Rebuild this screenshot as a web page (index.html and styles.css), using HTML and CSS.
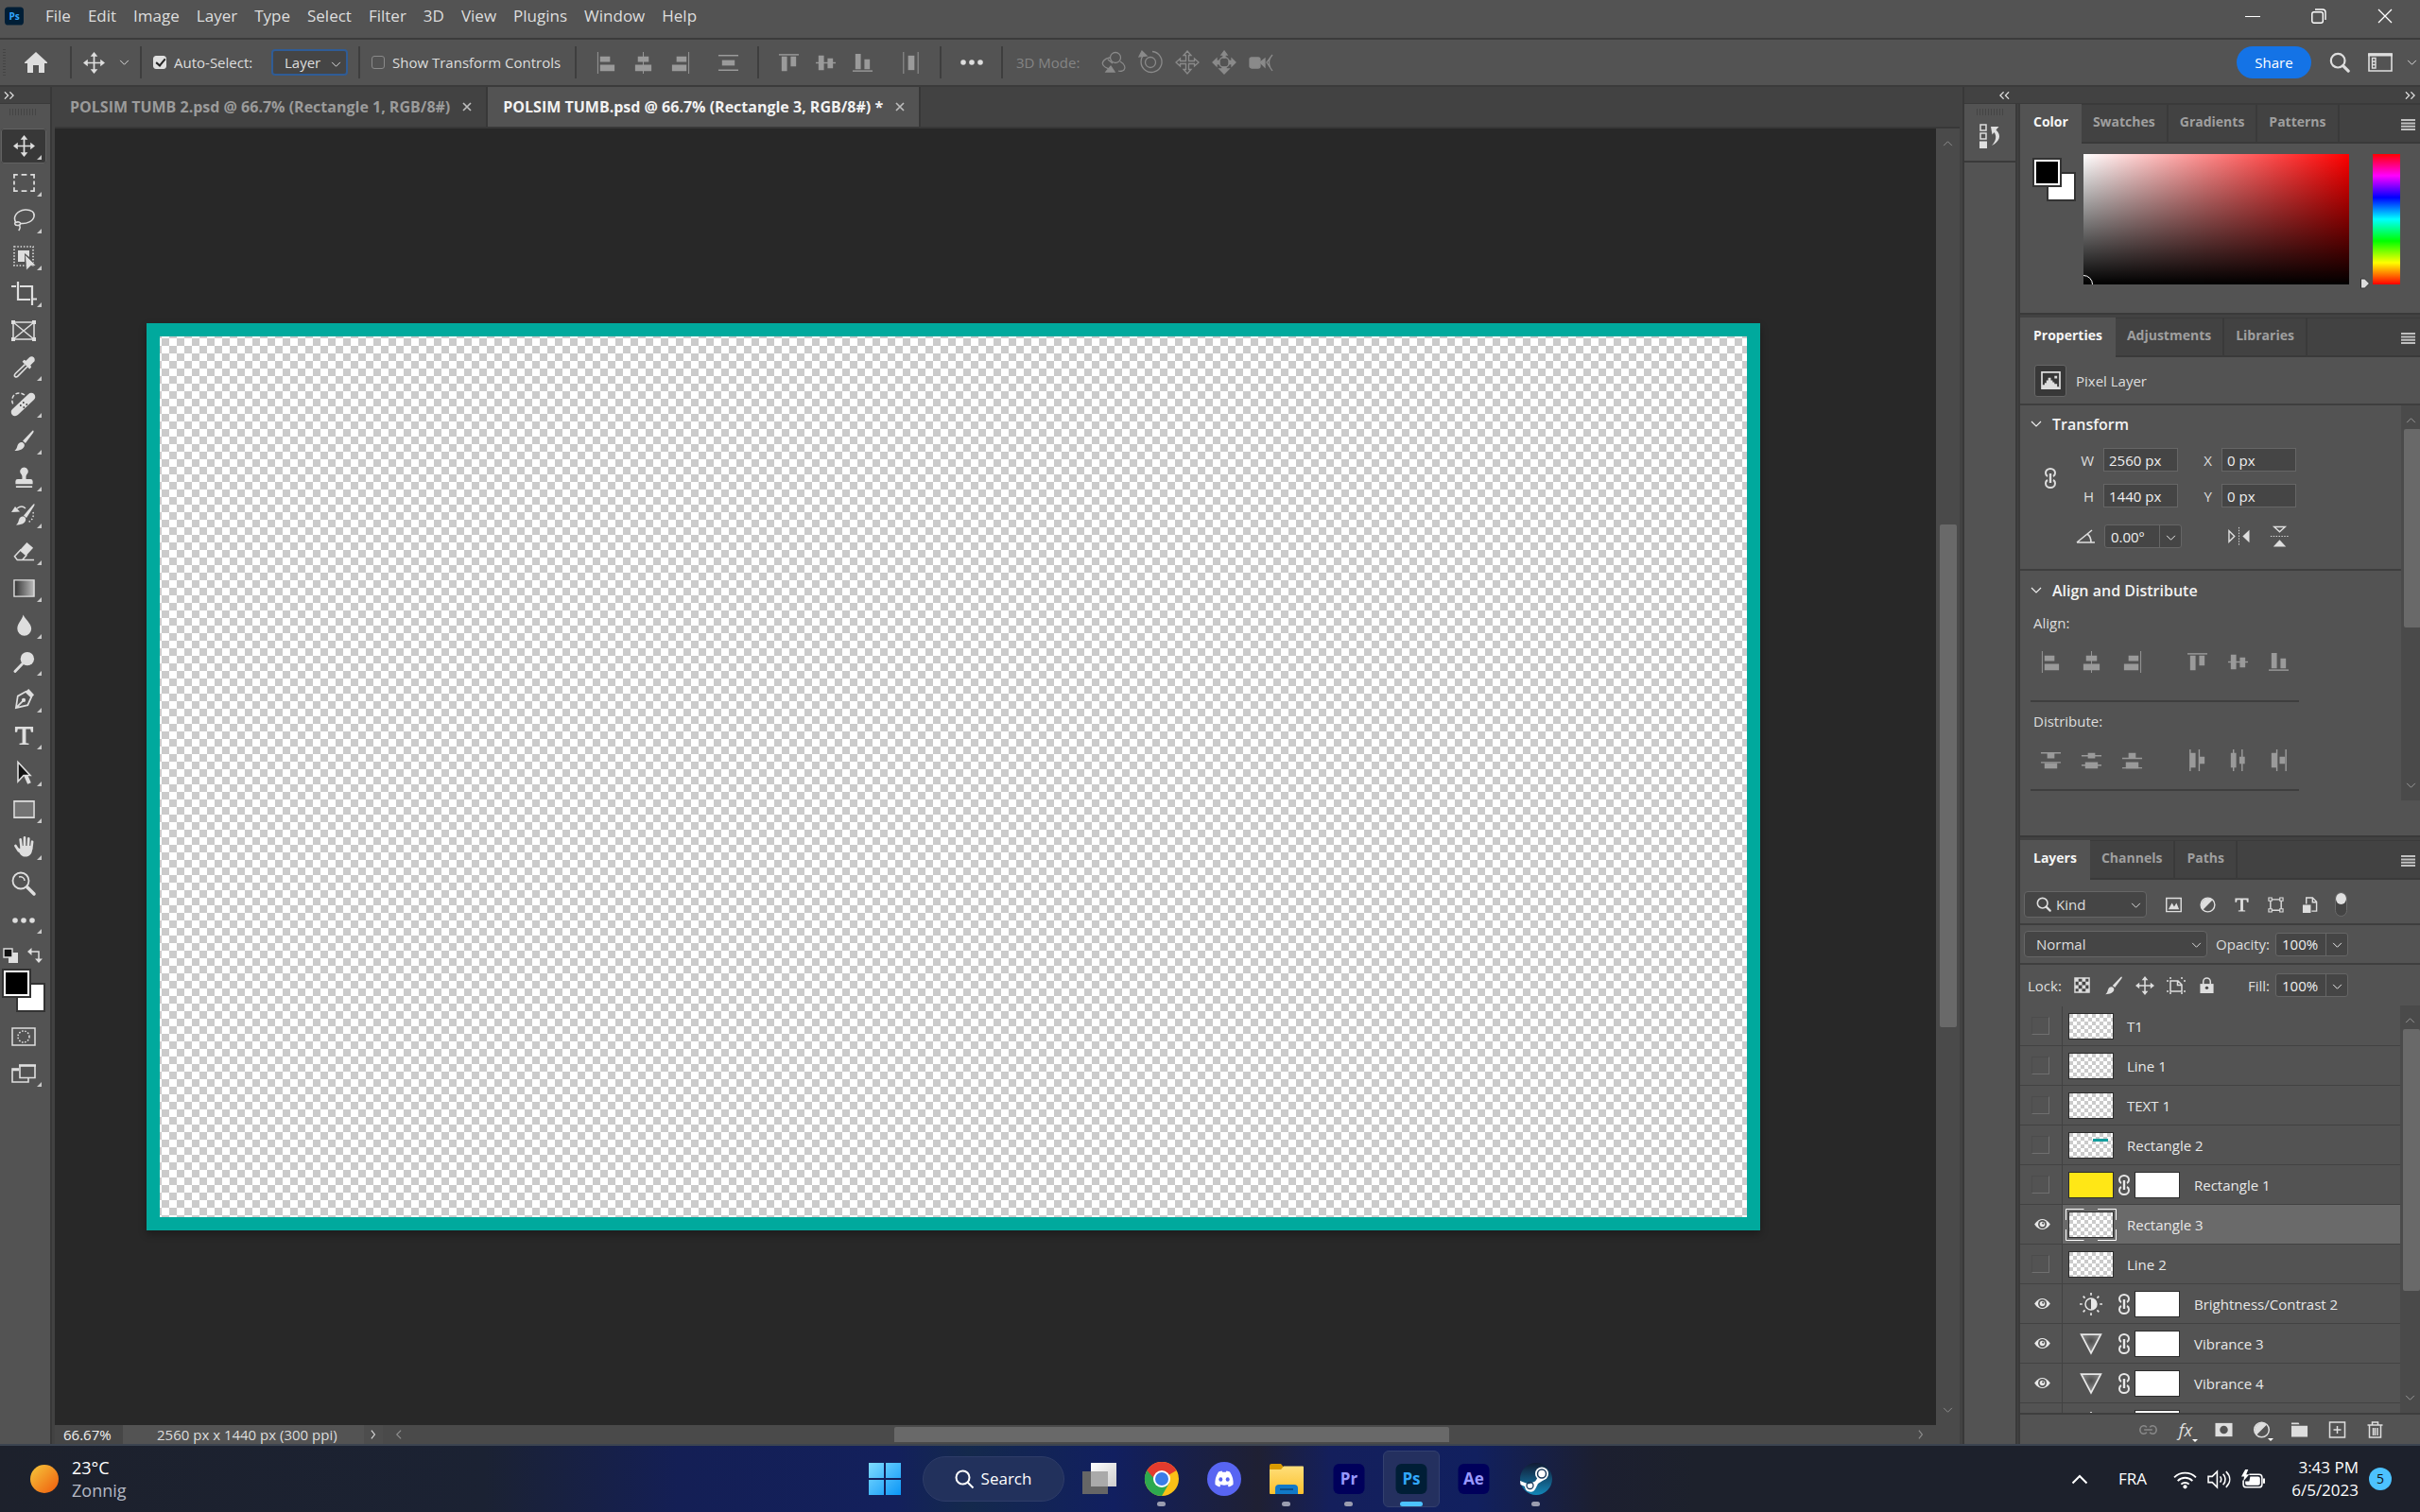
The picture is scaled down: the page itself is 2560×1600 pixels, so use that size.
FILE: index.html
```html
<!DOCTYPE html>
<html lang="en">
<head>
	<meta charset="UTF-8">
	<title>POLSIM TUMB.psd</title>
	<link rel="stylesheet" href="styles.css">
</head>
<body>
	<!-- shared icons -->
	<svg class="defs" aria-hidden="true">
		<defs>
			<linearGradient id="g-gray"><stop offset="0" stop-color="#333"/><stop offset="1" stop-color="#bbb"/></linearGradient>
			<radialGradient id="g-vib" cx=".5" cy=".35" r=".5"><stop offset="0" stop-color="#4c4c4c"/><stop offset="1" stop-color="#888"/></radialGradient>
			<linearGradient id="g-win" x2="1" y2="1"><stop offset="0" stop-color="#7fdcff"/><stop offset="1" stop-color="#0a96f7"/></linearGradient>
			<linearGradient id="g-view" x2="1" y2="1"><stop offset="0" stop-color="#fff"/><stop offset="1" stop-color="#ccc"/></linearGradient>
			<linearGradient id="g-folder" y2="1" x2="0"><stop offset="0" stop-color="#ffdf7a"/><stop offset="1" stop-color="#fbc02d"/></linearGradient>
			<linearGradient id="g-steam" y2="1" x2="0"><stop offset="0" stop-color="#111a33"/><stop offset="1" stop-color="#1387b8"/></linearGradient>
		</defs>
		<symbol id="down" viewBox="0 0 12 8"><path d="M1 1l5 5 5-5" fill="none" stroke="currentColor" stroke-width="1.1"/></symbol>
		<symbol id="up" viewBox="0 0 12 8"><path d="M1 7l5-5 5 5" fill="none" stroke="currentColor" stroke-width="1.1"/></symbol>
		<symbol id="left" viewBox="0 0 8 12"><path d="M7 1L2 6l5 5" fill="none" stroke="currentColor" stroke-width="1.3"/></symbol>
		<symbol id="right" viewBox="0 0 8 12"><path d="M1 1l4 5-4 5" fill="none" stroke="currentColor" stroke-width="1.3"/></symbol>
		<symbol id="expand" viewBox="0 0 12 8"><path d="M1 0l4 4-4 4M7 0l4 4-4 4" fill="none" stroke="currentColor" stroke-width="1.4"/></symbol>
		<symbol id="collapse" viewBox="0 0 12 8"><path d="M5 0L1 4l4 4M11 0L7 4l4 4" fill="none" stroke="currentColor" stroke-width="1.4"/></symbol>
		<symbol id="move" viewBox="0 0 24 24"><path d="M12 3v18M3 12h18" stroke="currentColor" stroke-width="1.8"/><path d="M12 0l4 5H8zM12 24l4-5H8zM0 12l5-4v8zM24 12l-5-4v8z" fill="currentColor"/></symbol>
		<symbol id="search" viewBox="0 0 24 24"><circle cx="10" cy="10" r="8" fill="none" stroke="currentColor" stroke-width="2.4"/><path d="M16 16l6 6" stroke="currentColor" stroke-width="3.4" stroke-linecap="round"/></symbol>
		<symbol id="burger" viewBox="0 0 15 12"><path d="M0 1h15M0 4.4h15M0 7.7h15M0 11h15" stroke="currentColor" stroke-width="2"/></symbol>
		<symbol id="dots" viewBox="0 0 24 6"><circle cx="3" cy="3" r="2.8" fill="currentColor"/><circle cx="12" cy="3" r="2.8" fill="currentColor"/><circle cx="21" cy="3" r="2.8" fill="currentColor"/></symbol>
		<symbol id="chain" viewBox="0 0 12 22"><path d="M3 9C1 8 1 6 1 5.500a5 4.500 0 0 1 10 0C11 6 11 8 9 9M3 13c-2 1-2 3-2 3.500a5 4.500 0 0 0 10 0c0-.5 0-2.500-2-3.500" fill="none" stroke="currentColor" stroke-width="2"/><path d="M6 6v10" stroke="currentColor" stroke-width="2.400"/></symbol>
		<symbol id="al-l" viewBox="0 0 24 24"><path d="M2.500 0v24" stroke="currentColor"/><path d="M5 5h11v6H5zM5 14h16v7H5z" fill="currentColor"/></symbol>
		<symbol id="al-c" viewBox="0 0 24 24"><path d="M12 0v24" stroke="currentColor"/><path d="M6 5h12v6H6zM3 14h18v7H3z" fill="currentColor"/></symbol>
		<symbol id="al-r" viewBox="0 0 24 24"><path d="M21.500 0v24" stroke="currentColor"/><path d="M8 5h11v6H8zM3 14h16v7H3z" fill="currentColor"/></symbol>
		<symbol id="al-t" viewBox="0 0 24 24"><path d="M1 3h22" stroke="currentColor" stroke-width="1.500"/><path d="M4 5h6v16H4zM14 5h6v11h-6z" fill="currentColor"/></symbol>
		<symbol id="al-m" viewBox="0 0 24 24"><path d="M1 12h22" stroke="currentColor" stroke-width="1.500"/><path d="M4 4h6v16H4zM14 7h6v11h-6z" fill="currentColor"/></symbol>
		<symbol id="al-b" viewBox="0 0 24 24"><path d="M1 21h22" stroke="currentColor" stroke-width="1.500"/><path d="M4 2h6v17H4zM14 8h6v11h-6z" fill="currentColor"/></symbol>
		<symbol id="ds-v" viewBox="0 0 24 24"><path d="M1 4h22M1 20h22" stroke="currentColor" stroke-width="1.500"/><path d="M5 9h14v6H5z" fill="currentColor"/></symbol>
		<symbol id="ds-h" viewBox="0 0 24 24"><path d="M4 0v24M20 0v24" stroke="currentColor"/><path d="M9 4h7v16H9z" fill="currentColor"/></symbol>
		<symbol id="di-t" viewBox="0 0 24 24"><path d="M1 4h22M1 14.500h22" stroke="currentColor" stroke-width="1.500"/><path d="M8 4h8v6H8zM5 15h14v6H5z" fill="currentColor"/></symbol>
		<symbol id="di-m" viewBox="0 0 24 24"><path d="M1 7h22M1 17.500h22" stroke="currentColor" stroke-width="1.500"/><path d="M8 4h8v6H8zM5 14h14v7H5z" fill="currentColor"/></symbol>
		<symbol id="di-b" viewBox="0 0 24 24"><path d="M1 10h22M1 20.500h22" stroke="currentColor" stroke-width="1.500"/><path d="M8 4h8v6H8zM5 14h14v7H5z" fill="currentColor"/></symbol>
		<symbol id="di-l" viewBox="0 0 24 24"><path d="M4 0v24M14 0v24" stroke="currentColor" stroke-width="1.500"/><path d="M4 4h6v16H4zM14 8h6v8h-6z" fill="currentColor"/></symbol>
		<symbol id="di-c" viewBox="0 0 24 24"><path d="M7 0v24M16.500 0v24" stroke="currentColor" stroke-width="1.500"/><path d="M4 4h6v16H4zM13.500 8h6v8h-6z" fill="currentColor"/></symbol>
		<symbol id="di-r" viewBox="0 0 24 24"><path d="M10 0v24M20 0v24" stroke="currentColor" stroke-width="1.500"/><path d="M4 4h6v16H4zM13 8h6v8h-6z" fill="currentColor"/></symbol>
		<symbol id="brush" viewBox="0 0 24 24"><path d="M22 0.500c1 .5.5 1.500 0 2.500L13.500 14.500l-3-2.500L20 2c.7-.8 1.400-1.500 2-1.500zM9 13.500c2 0 4 2 3.300 4.300C11.500 21 7 23 1.500 23 4 21 4 19 4.800 17 5.500 15 7 13.500 9 13.500z" fill="currentColor"/></symbol>
		<symbol id="half" viewBox="0 0 18 18"><circle cx="9" cy="9" r="7.800" fill="none" stroke="currentColor" stroke-width="1.500"/><path d="M14.500 3.500A7.800 7.800 0 0 0 3.500 14.500z" fill="currentColor"/></symbol>
		<symbol id="type" viewBox="0 0 24 24"><path d="M2 2h20v6h-2.300l-.7-3.300h-5V20l3.200.5V22H6.800v-1.500L10 20V4.700H5L4.300 8H2z" fill="currentColor"/></symbol>
		<symbol id="eye" viewBox="0 0 20 14"><path d="M1 7C4 2.500 7 1 10 1s6 1.500 9 6c-3 4.500-6 6-9 6S4 11.500 1 7z" fill="currentColor"/><circle cx="10" cy="7" r="4.800" fill="#535353"/><circle cx="10" cy="7" r="3" fill="currentColor"/><circle cx="10.800" cy="6" r="1.200" fill="#535353"/></symbol>
		<symbol id="bright" viewBox="0 0 26 26"><circle cx="13" cy="13" r="6.500" fill="none" stroke="currentColor" stroke-width="1.600"/><path d="M13 6.500a6.500 6.500 0 0 1 0 13z" fill="currentColor"/><path d="M13 0v3M13 23v3M0 13h3M23 13h3M4 4l2 2M20 20l2 2M4 22l2-2M20 6l2-2" stroke="currentColor" stroke-width="1.800"/></symbol>
		<symbol id="vib" viewBox="0 0 22 22"><path d="M1.500 2h19L11 20z" fill="url(#g-vib)" stroke="currentColor" stroke-width="1.600"/></symbol>
	</svg>

	<nav class="menubar">
		<svg class="logo" viewBox="0 0 22 21"><rect width="22" height="21" rx="4" fill="#001e36"/><text x="11" y="15" text-anchor="middle">Ps</text></svg>
		<button>File</button><button>Edit</button><button>Image</button><button>Layer</button><button>Type</button><button>Select</button><button>Filter</button><button>3D</button><button>View</button><button>Plugins</button><button>Window</button><button>Help</button>
		<div class="winctl">
			<button aria-label="Minimize"><svg viewBox="0 0 16 16"><path d="M0 8.500h16" stroke="#fff"/></svg></button>
			<button aria-label="Restore"><svg viewBox="0 0 16 16"><rect x=".8" y="3.800" width="11.500" height="11.500" rx="2" fill="none" stroke="#fff" stroke-width="1.400"/><path d="M4 1h8a3 3 0 0 1 3 3v8" fill="none" stroke="#fff" stroke-width="1.400"/></svg></button>
			<button aria-label="Close"><svg viewBox="0 0 16 16"><path d="M1 1l14 14M15 1L1 15" stroke="#fff" stroke-width="1.300"/></svg></button>
		</div>
	</nav>

	<div class="options">
		<span class="grip-v"></span>
		<button class="home" aria-label="Home"><svg viewBox="0 0 26 22"><path d="M13 0l12 11v1h-3v10h-6v-8h-6v8H4V12H1v-1z" fill="currentColor"/></svg></button>
		<span class="sep"></span>
		<button class="tool-now" aria-label="Move tool"><svg class="i24"><use href="#move"/></svg><svg class="chev"><use href="#down"/></svg></button>
		<span class="sep"></span>
		<label class="check"><input type="checkbox" checked> Auto-Select:</label>
		<span class="pick focus"><select aria-label="Auto-select target"><option>Layer</option></select><svg class="chev"><use href="#down"/></svg></span>
		<span class="sep"></span>
		<label class="check wide"><input type="checkbox"> Show Transform Controls</label>
		<span class="sep"></span>
		<div class="icons dim">
			<button aria-label="Align left"><svg class="i24"><use href="#al-l"/></svg></button>
			<button aria-label="Align centers"><svg class="i24"><use href="#al-c"/></svg></button>
			<button aria-label="Align right"><svg class="i24"><use href="#al-r"/></svg></button>
			<button class="apart" aria-label="Distribute vertically"><svg class="i24"><use href="#ds-v"/></svg></button>
		</div>
		<span class="sep"></span>
		<div class="icons dim">
			<button aria-label="Align top"><svg class="i24"><use href="#al-t"/></svg></button>
			<button aria-label="Align middles"><svg class="i24"><use href="#al-m"/></svg></button>
			<button aria-label="Align bottom"><svg class="i24"><use href="#al-b"/></svg></button>
			<button class="apart" aria-label="Distribute horizontally"><svg class="i24"><use href="#ds-h"/></svg></button>
		</div>
		<span class="sep"></span>
		<button class="more" aria-label="More"><svg class="dots"><use href="#dots"/></svg></button>
		<span class="sep"></span>
		<span class="mode">3D Mode:</span>
		<div class="icons faint">
			<button aria-label="Orbit"><svg class="i26" viewBox="0 0 26 26"><circle cx="15" cy="8" r="5.500"/><path d="M9 8C3 9 0 13 2 16s5 3 8 5M20 12c5 3 6 7 4 9-1 1-4 2-6 1M12 14l-5-4"/><path d="M5 23l5-6 4 6z" fill="currentColor"/></svg></button>
			<button aria-label="Roll"><svg class="i26" viewBox="0 0 26 26"><circle cx="13" cy="13" r="5.500"/><path d="M7 4a11 11 0 1 0 8-2.500"/><path d="M1 7l3-6 5 5z" fill="currentColor"/></svg></button>
			<button aria-label="Pan"><svg class="i26" viewBox="0 0 26 26"><path d="M13 1l4 4.500h-2.500v6h6V9L25 13l-4.500 4v-2.500h-6v6H17L13 25l-4-4.500h2.500v-6h-6V17L1 13l4.500-4v2.500h6v-6H9z"/></svg></button>
			<button aria-label="Slide"><svg class="i26" viewBox="0 0 26 26"><circle cx="13" cy="13" r="5.500"/><path d="M13 1l3 4h-2v3h-2V5h-2zM1 13l4-4v2.500h3v3H5V17zM25 13l-4-4v2.500h-3v3h3V17zM13 25l5-5h-3v-2h-4v2H8z" fill="currentColor"/></svg></button>
			<button aria-label="Zoom camera"><svg class="i26" viewBox="0 0 26 26"><rect x="1" y="8" width="11" height="11" rx="2" fill="currentColor"/><path d="M12 13l5-4v9z" fill="currentColor"/><path d="M25 5l-6 8 6 9M23 8c-2 3-2 8 0 11"/></svg></button>
		</div>
		<div class="opt-right">
			<button class="share">Share</button>
			<button aria-label="Search"><svg class="i22"><use href="#search"/></svg></button>
			<button class="layout" aria-label="Workspace"><svg viewBox="0 0 26 20"><path d="M1 1h24v18H1z" fill="none" stroke="currentColor" stroke-width="1.600"/><path d="M0 2h26" stroke="currentColor" stroke-width="3"/><path d="M4.500 5.500h3.500v10.500H4.500zM4.500 9h3.500M4.500 12.500h3.500" fill="none" stroke="currentColor" stroke-width="1.400"/></svg><svg class="chev"><use href="#down"/></svg></button>
		</div>
	</div>

	<div class="workspace">
		<aside class="toolbar">
			<div class="head"><svg class="dbl"><use href="#expand"/></svg></div>
			<div class="grip"></div>
			<button class="tool sub on" aria-label="Move"><svg class="i24"><use href="#move"/></svg></button>
			<button class="tool sub" aria-label="Marquee"><svg class="i24" viewBox="0 0 24 24"><path d="M1 7V3h4M9 3h6M19 3h4v4M23 10v4M23 17v4h-4M15 21H9M5 21H1v-4M1 14v-4" fill="none" stroke="currentColor" stroke-width="1.800"/></svg></button>
			<button class="tool sub" aria-label="Lasso"><svg class="i24" viewBox="0 0 24 24"><path d="M3 15C-1 9 4 2 13 1c7-.5 11 3 10 7.500-1 5-8 8.500-15 7.500M3 15c2-1 5-.5 5 1.500s-5 2.500-6 .5 1-2 1-2zM6 18c2 1 2 3 0 6" fill="none" stroke="currentColor" stroke-width="1.600"/></svg></button>
			<button class="tool sub" aria-label="Object selection"><svg class="i26" viewBox="0 0 26 26"><path d="M3 2h20v20H3z" fill="none" stroke="currentColor" stroke-width="1.600" stroke-dasharray="1.500 1.800"/><path d="M7 6h12v7l-5-4v9H7z" fill="currentColor"/><path d="M14.500 10.500L26 22l-5.500.3L16 27z" fill="currentColor" stroke="#535353" stroke-width=".6"/></svg></button>
			<button class="tool sub" aria-label="Crop"><svg class="i26" viewBox="0 0 26 26"><path d="M7 0v19h13M0 5h5M9 5h13v20M22 18.500h5" fill="none" stroke="currentColor" stroke-width="2.200"/></svg></button>
			<button class="tool" aria-label="Frame"><svg class="i26" viewBox="0 0 26 26"><path d="M2 4h22v18H2zM2 4l22 18M24 4L2 22" fill="none" stroke="currentColor" stroke-width="1.500"/><path d="M0 2h4v4H0zM22 2h4v4h-4zM0 20h4v4H0zM22 20h4v4h-4z" fill="currentColor"/></svg></button>
			<button class="tool sub" aria-label="Eyedropper"><svg class="i24" viewBox="0 0 24 24"><path d="M13 9L2.500 19c-1.500 1.500-1.300 3-.5 3.500s2 .5 3-.5L15.500 11.500" fill="none" stroke="currentColor" stroke-width="1.700"/><path d="M10 6l2-2 2 1 4-4c2-2 7 0 5.500 4.500L19 10l1 2-2 2z" fill="currentColor"/></svg></button>
			<button class="tool sub" aria-label="Healing brush"><svg class="i26" viewBox="0 0 26 26"><path d="M4 21L21 5" stroke="currentColor" stroke-width="8.500" stroke-linecap="round"/><path d="M14 3C9-1 2 1 1 7c-.5 3 0 5 2 7" fill="none" stroke="currentColor" stroke-width="1.500" stroke-dasharray="4 2"/><path d="M9 14h1.600M12 11h1.600M12.500 16h1.600M15.500 13h1.600" stroke="#535353" stroke-width="1.800"/></svg></button>
			<button class="tool sub" aria-label="Brush"><svg class="i24"><use href="#brush"/></svg></button>
			<button class="tool sub" aria-label="Clone stamp"><svg class="i24" viewBox="0 0 24 24"><path d="M12 .5a4.500 4.500 0 0 1 3 7.800c-1 1.200-1 3.200-.8 5.200H19a2.500 2.500 0 0 1 2.500 2.500v3h-19v-3A2.500 2.500 0 0 1 5 13.500h4.800c.2-2 .2-4-.8-5.200a4.500 4.500 0 0 1 3-7.800zM3 21h18v2H3z" fill="currentColor"/></svg></button>
			<button class="tool sub" aria-label="History brush"><svg class="i26" viewBox="0 0 26 26"><path d="M24 1c1 .5.5 1.500 0 2.500L16 16l-3-2.500L22 3zM12 14.500c2 0 4 2 3 4.500-1 3-5 4.500-10 4.500 2.500-2 2.500-4 3-5.500.7-2 2-3.500 4-3.500z" fill="currentColor"/><path d="M0 10l4-6 5 5.500z" fill="currentColor"/><path d="M6 6c4-3 7-2 9 0" stroke="currentColor" stroke-width="1.400" fill="none"/><path d="M23 10c1 5-1 9-6 11" fill="none" stroke="currentColor" stroke-width="1.500" stroke-dasharray="1.500 2"/></svg></button>
			<button class="tool sub" aria-label="Eraser"><svg class="i24" viewBox="0 0 24 24"><path d="M15 2l7 6-8 9-7-6z" fill="currentColor"/><path d="M8.500 10L1.500 17.500l3 4h5.500L15 16M9 21.500h14" fill="none" stroke="currentColor" stroke-width="1.600"/></svg></button>
			<button class="tool sub" aria-label="Gradient"><svg class="i24" viewBox="0 0 24 24"><path d="M1 3h22v18H1z" fill="url(#g-gray)" stroke="currentColor" stroke-width="1.500"/></svg></button>
			<button class="tool sub" aria-label="Blur"><svg class="i24" viewBox="0 0 24 24"><path d="M11 .5c2 5 9 9.500 9 15.500a7.500 7.500 0 0 1-15.500 0C4.500 10 10 6 11 .5z" fill="currentColor"/></svg></button>
			<button class="tool sub" aria-label="Dodge"><svg class="i24" viewBox="0 0 24 24"><circle cx="15.500" cy="8.500" r="7.500" fill="currentColor"/><path d="M10 14l-8 8.500" stroke="currentColor" stroke-width="3" stroke-linecap="round"/></svg></button>
			<button class="tool sub" aria-label="Pen"><svg class="i24" viewBox="0 0 24 24"><path d="M3 22l2-13 9-5 6 6-4 9zM3.500 21.500l7-7" fill="none" stroke="currentColor" stroke-width="1.800"/><circle cx="11.500" cy="13.500" r="2.200" fill="currentColor"/><path d="M13 4.500L17 1l6 6.500L20 11z" fill="currentColor"/></svg></button>
			<button class="tool sub" aria-label="Type"><svg class="i24"><use href="#type"/></svg></button>
			<button class="tool sub" aria-label="Path selection"><svg class="i26" viewBox="0 0 26 26"><path d="M15 15l4 9" stroke="currentColor" stroke-width="4"/><path d="M7 1.500l13 14h-7l-6 6.500z" fill="#111" stroke="currentColor" stroke-width="1.600"/></svg></button>
			<button class="tool sub" aria-label="Rectangle"><svg class="i24" viewBox="0 0 24 24"><path d="M1 3h22v18H1z" fill="#747474" stroke="currentColor" stroke-width="1.600"/></svg></button>
			<button class="tool sub" aria-label="Hand"><svg class="i24" viewBox="0 0 24 24"><path d="M2.500 11.500L6 17M8 4.500L9 13M12.500 2.500V13M17 3.500L16.500 13M21 7l-1 8" stroke="currentColor" stroke-width="2.800" stroke-linecap="round"/><path d="M4 13.500l3.500 1 .7-3h12.500L21 15c0 5-3 8.500-7.500 8.500-4 0-6-2-9.500-10z" fill="currentColor"/></svg></button>
			<button class="tool" aria-label="Zoom"><svg class="i26" viewBox="0 0 26 26"><circle cx="10" cy="10" r="8.500" fill="none" stroke="currentColor" stroke-width="1.800"/><path d="M17 17l7 7" stroke="currentColor" stroke-width="3.500" stroke-linecap="round"/><path d="M8 6c3-1 6 1 6 4" fill="none" stroke="currentColor" stroke-width="1.500"/></svg></button>
			<button class="tool sub" aria-label="Edit toolbar"><svg class="dots"><use href="#dots"/></svg></button>
			<div class="swap">
				<button aria-label="Default colors"><svg viewBox="0 0 16 16"><path d="M6 5h10v11H6z" fill="currentColor"/><path d="M1 1h9v9H1z" fill="#111" stroke="currentColor" stroke-width="1.400"/></svg></button>
				<button aria-label="Swap colors"><svg viewBox="0 0 16 16"><path d="M3 4h9v9" fill="none" stroke="currentColor" stroke-width="1.500"/><path d="M0 4l4.500-4v8zM12 16l-4-4.500h8z" fill="currentColor"/></svg></button>
			</div>
			<div class="colors"><button class="bg" aria-label="Background color"></button><button class="fg" aria-label="Foreground color"></button></div>
			<button class="tool" aria-label="Quick mask"><svg class="i26" viewBox="0 0 26 26"><path d="M1 4h24v18H1z" fill="none" stroke="currentColor" stroke-width="1.500"/><circle cx="13" cy="13" r="6" fill="none" stroke="currentColor" stroke-width="1.500" stroke-dasharray="1.600 1.600"/></svg></button>
			<button class="tool sub" aria-label="Screen mode"><svg class="i26" viewBox="0 0 26 26"><path d="M8 8H1v14h17v-4" fill="none" stroke="currentColor" stroke-width="1.600"/><path d="M9 4.500h16v13H9z" fill="none" stroke="currentColor" stroke-width="1.600"/><path d="M8 4.500h18M1 9h7" stroke="currentColor" stroke-width="2.600"/></svg></button>
		</aside>

		<main class="doc">
			<div class="doctabs">
				<div class="doctab"><span>POLSIM TUMB 2.psd @ 66.7% (Rectangle 1, RGB/8#)</span><button aria-label="Close tab"><svg viewBox="0 0 10 10"><path d="M1 1l8 8M9 1L1 9" stroke="currentColor" stroke-width="1.700"/></svg></button></div>
				<div class="doctab on"><span>POLSIM TUMB.psd @ 66.7% (Rectangle 3, RGB/8#) *</span><button aria-label="Close tab"><svg viewBox="0 0 10 10"><path d="M1 1l8 8M9 1L1 9" stroke="currentColor" stroke-width="1.700"/></svg></button></div>
			</div>
			<div class="view">
				<div class="canvas"><div class="artboard"></div></div>
				<div class="vscroll">
					<svg class="chev"><use href="#up"/></svg>
					<div class="track"><div class="thumb"></div></div>
					<svg class="chev"><use href="#down"/></svg>
				</div>
			</div>
			<div class="status">
				<input class="zoom" type="text" value="66.67%" aria-label="Zoom level">
				<div class="info">2560 px x 1440 px (300 ppi)</div>
				<button aria-label="Document info"><svg class="chev-v"><use href="#right"/></svg></button>
				<div class="hscroll">
					<svg class="chev-v"><use href="#left"/></svg>
					<div class="track"><div class="thumb"></div></div>
					<svg class="chev-v"><use href="#right"/></svg>
				</div>
			</div>
		</main>

		<aside class="side">
			<div class="head"><svg class="dbl"><use href="#collapse"/></svg><svg class="dbl"><use href="#expand"/></svg></div>
			<div class="side-body">
				<div class="dock">
					<div class="dockbox">
						<div class="grip"></div>
						<button aria-label="History"><svg viewBox="0 0 22 26"><path d="M1 1h6v6H1zM1 10h6v6H1z" fill="none" stroke="currentColor" stroke-width="1.500"/><path d="M0 18.500h8V26H0z" fill="currentColor"/><path d="M20.500 3L12 3l1.500 8.500 2-2.500c3 4 2 9-2.500 14 8-4 11-10.500 4.500-16.500z" fill="currentColor"/></svg></button>
					</div>
				</div>
				<div class="panels">
					<section class="panel color">
						<div class="tabs"><button class="on">Color</button><button>Swatches</button><button>Gradients</button><button>Patterns</button><button class="menu" aria-label="Panel menu"><svg><use href="#burger"/></svg></button></div>
						<div class="picker">
							<div class="colors"><button class="bg" aria-label="Background color"></button><button class="fg" aria-label="Foreground color"></button></div>
							<div class="field"><span class="ring"></span></div>
							<div class="hue"><svg class="knob" viewBox="0 0 11 12"><path d="M1 1h4l5 5-5 5H1z" fill="#ddd" stroke="#333"/></svg></div>
						</div>
					</section>

					<section class="panel props">
						<div class="tabs"><button class="on">Properties</button><button>Adjustments</button><button>Libraries</button><button class="menu" aria-label="Panel menu"><svg><use href="#burger"/></svg></button></div>
						<div class="kind">
							<span class="badge"><svg viewBox="0 0 22 20"><path d="M1 1h20v18H1z" fill="none" stroke="currentColor" stroke-width="1.800"/><path d="M1 15h3v-2h2v-3h2V7h3v3h2v2h2v2h3v3h2v2H1zM15 5h3v3h-3z" fill="currentColor"/></svg></span>
							Pixel Layer
						</div>
						<div class="scrolled">
							<div class="content">
								<div class="block transform">
									<h3><svg class="fold"><use href="#down"/></svg>Transform</h3>
									<div class="dims">
										<svg class="chain"><use href="#chain"/></svg>
										<label for="w">W</label><input id="w" type="text" value="2560 px">
										<label for="x">X</label><input id="x" type="text" value="0 px">
										<label for="h">H</label><input id="h" type="text" value="1440 px">
										<label for="y">Y</label><input id="y" type="text" value="0 px">
									</div>
									<div class="rotate">
										<svg class="angle" viewBox="0 0 20 15"><path d="M1 14h19M1 14L17 1M12 5c3 2 4 5 4 9" fill="none" stroke="currentColor" stroke-width="1.600"/></svg>
										<span class="combo"><input type="text" value="0.00º" aria-label="Angle"><button aria-label="Angle presets"><svg class="chev"><use href="#down"/></svg></button></span>
										<button aria-label="Flip horizontal"><svg class="i24" viewBox="0 0 24 24"><path d="M1 6l6 6-6 6z" fill="none" stroke="currentColor" stroke-width="1.500"/><path d="M23.500 5v14L16 12z" fill="currentColor"/><path d="M12 2v20" stroke="currentColor" stroke-dasharray="1.500 1.500"/></svg></button>
										<button aria-label="Flip vertical"><svg class="i24" viewBox="0 0 24 24"><path d="M6 1.500h12L12 7z" fill="none" stroke="currentColor" stroke-width="1.500"/><path d="M5 23.500h14L12 16z" fill="currentColor"/><path d="M2 12h20" stroke="currentColor" stroke-dasharray="1.500 1.500"/></svg></button>
									</div>
								</div>
								<div class="block align">
									<h3><svg class="fold"><use href="#down"/></svg>Align and Distribute</h3>
									<p>Align:</p>
									<div class="six">
										<button aria-label="Left"><svg class="i24"><use href="#al-l"/></svg></button><button aria-label="Center"><svg class="i24"><use href="#al-c"/></svg></button><button aria-label="Right"><svg class="i24"><use href="#al-r"/></svg></button>
										<button class="apart" aria-label="Top"><svg class="i24"><use href="#al-t"/></svg></button><button aria-label="Middle"><svg class="i24"><use href="#al-m"/></svg></button><button aria-label="Bottom"><svg class="i24"><use href="#al-b"/></svg></button>
									</div>
									<p>Distribute:</p>
									<div class="six last">
										<button aria-label="Top edges"><svg class="i24"><use href="#di-t"/></svg></button><button aria-label="Vertical centers"><svg class="i24"><use href="#di-m"/></svg></button><button aria-label="Bottom edges"><svg class="i24"><use href="#di-b"/></svg></button>
										<button class="apart" aria-label="Left edges"><svg class="i24"><use href="#di-l"/></svg></button><button aria-label="Horizontal centers"><svg class="i24"><use href="#di-c"/></svg></button><button aria-label="Right edges"><svg class="i24"><use href="#di-r"/></svg></button>
									</div>
								</div>
							</div>
							<div class="pscroll"><svg class="chev"><use href="#up"/></svg><div class="track"><div class="thumb"></div></div><svg class="chev"><use href="#down"/></svg></div>
						</div>
					</section>

					<section class="panel layers">
						<div class="tabs"><button class="on">Layers</button><button>Channels</button><button>Paths</button><button class="menu" aria-label="Panel menu"><svg><use href="#burger"/></svg></button></div>
						<div class="lrow filter">
							<span class="pick kindpick"><svg class="glass"><use href="#search"/></svg><select aria-label="Filter kind"><option>Kind</option></select><svg class="chev"><use href="#down"/></svg></span>
							<div class="filters">
								<button aria-label="Pixel layers"><svg viewBox="0 0 18 18"><path d="M.8 1.500h16.400v15H.8z" fill="none" stroke="currentColor" stroke-width="1.500"/><path d="M3 14l4-7 2.500 4L12 7l3 7z" fill="currentColor"/></svg></button>
								<button aria-label="Adjustment layers"><svg><use href="#half"/></svg></button>
								<button aria-label="Type layers"><svg><use href="#type"/></svg></button>
								<button aria-label="Shape layers"><svg viewBox="0 0 18 18"><path d="M3 3h12v12H3z" fill="none" stroke="currentColor" stroke-width="1.500"/><path d="M1 1h3.500v3.500H1zM13.500 1H17v3.500h-3.500zM1 13.500h3.500V17H1zM13.500 13.500H17V17h-3.500z" fill="#535353" stroke="currentColor" stroke-width="1.200"/></svg></button>
								<button aria-label="Smart objects"><svg viewBox="0 0 18 18"><path d="M5 8V1h7l4.500 4.500V16H11M12 1v5h4.500" fill="none" stroke="currentColor" stroke-width="1.500"/><path d="M1 9h9v9H1z" fill="currentColor"/></svg></button>
							</div>
							<label class="toggle"><input type="checkbox" checked aria-label="Layer filtering"></label>
						</div>
						<div class="lrow">
							<span class="pick blend"><select aria-label="Blend mode"><option>Normal</option></select><svg class="chev"><use href="#down"/></svg></span>
							<label class="amount" for="opacity">Opacity:</label>
							<span class="combo"><input id="opacity" type="text" value="100%"><button aria-label="Opacity slider"><svg class="chev"><use href="#down"/></svg></button></span>
						</div>
						<div class="lrow lock">
							<span>Lock:</span>
							<div class="locks">
								<button aria-label="Lock transparent pixels"><svg viewBox="0 0 18 18"><path d="M1 1h16v16H1z" fill="#444" stroke="currentColor" stroke-width="1.500"/><path d="M1 1h4v4H1zM9 1h4v4H9zM5 5h4v4H5zM13 5h4v4h-4zM1 9h4v4H1zM9 9h4v4H9zM5 13h4v4H5zM13 13h4v4h-4z" fill="currentColor"/></svg></button>
								<button aria-label="Lock image pixels"><svg class="big"><use href="#brush"/></svg></button>
								<button aria-label="Lock position"><svg class="big"><use href="#move"/></svg></button>
								<button aria-label="Lock artboard"><svg class="big" viewBox="0 0 20 18"><path d="M4 4h8l4 4v7H4zM11.500 4v4.500H16M0 4h2M4 0v2M4 16v2M0 15h2M16 16v2M18 15h2M18 4h2M16 0v2" fill="none" stroke="currentColor" stroke-width="1.500"/></svg></button>
								<button aria-label="Lock all"><svg viewBox="0 0 18 18"><path d="M5 8V5a4 4 0 0 1 8 0v3" fill="none" stroke="currentColor" stroke-width="1.600"/><path d="M1.500 7.500h15V18h-15z" fill="currentColor"/><circle cx="9" cy="12" r="1.800" fill="#444"/></svg></button>
							</div>
							<label class="amount" for="fill">Fill:</label>
							<span class="combo"><input id="fill" type="text" value="100%"><button aria-label="Fill slider"><svg class="chev"><use href="#down"/></svg></button></span>
						</div>
						<div class="scrolled">
							<ul class="list">
								<li><label class="vis"><input type="checkbox" aria-label="Show T1"></label><span class="thumb-img"></span>T1</li>
								<li><label class="vis"><input type="checkbox" aria-label="Show Line 1"></label><span class="thumb-img"></span>Line 1</li>
								<li><label class="vis"><input type="checkbox" aria-label="Show TEXT 1"></label><span class="thumb-img"></span>TEXT 1</li>
								<li><label class="vis"><input type="checkbox" aria-label="Show Rectangle 2"></label><span class="thumb-img"><i class="bar"></i></span>Rectangle 2</li>
								<li><label class="vis"><input type="checkbox" aria-label="Show Rectangle 1"></label><span class="thumb-img yellow"></span><svg class="chain"><use href="#chain"/></svg><span class="mask"></span>Rectangle 1</li>
								<li class="on"><label class="vis"><input type="checkbox" checked aria-label="Show Rectangle 3"><svg><use href="#eye"/></svg></label><span class="thumb-img"><svg class="frame" viewBox="0 0 54 34"><path d="M.5 12V.5h19M34 .5h19.500V12M53.500 22v11.500H34M19.500 33.500H.5V22" fill="none" stroke="#fff"/></svg></span>Rectangle 3</li>
								<li><label class="vis"><input type="checkbox" aria-label="Show Line 2"></label><span class="thumb-img"></span>Line 2</li>
								<li><label class="vis"><input type="checkbox" checked aria-label="Show Brightness/Contrast 2"><svg><use href="#eye"/></svg></label><svg class="adj"><use href="#bright"/></svg><svg class="chain"><use href="#chain"/></svg><span class="mask"></span>Brightness/Contrast 2</li>
								<li><label class="vis"><input type="checkbox" checked aria-label="Show Vibrance 3"><svg><use href="#eye"/></svg></label><svg class="adj"><use href="#vib"/></svg><svg class="chain"><use href="#chain"/></svg><span class="mask"></span>Vibrance 3</li>
								<li><label class="vis"><input type="checkbox" checked aria-label="Show Vibrance 4"><svg><use href="#eye"/></svg></label><svg class="adj"><use href="#vib"/></svg><svg class="chain"><use href="#chain"/></svg><span class="mask"></span>Vibrance 4</li>
								<li><label class="vis"><input type="checkbox" checked aria-label="Show next layer"><svg><use href="#eye"/></svg></label><svg class="adj"><use href="#bright"/></svg><svg class="chain"><use href="#chain"/></svg><span class="mask"></span></li>
							</ul>
							<div class="pscroll"><svg class="chev"><use href="#up"/></svg><div class="track"><div class="thumb"></div></div><svg class="chev"><use href="#down"/></svg></div>
						</div>
						<div class="foot">
							<button class="off" aria-label="Link layers"><svg viewBox="0 0 22 12"><path d="M9 3C8 1 6 1 5.500 1a4.500 5 0 0 0 0 10C6 11 8 11 9 9M13 3c1-2 3-2 3.500-2a4.500 5 0 0 1 0 10c-.5 0-2.500 0-3.500-2M6 6h10" fill="none" stroke="currentColor" stroke-width="1.800"/></svg></button>
							<button class="fx" aria-label="Layer style"><i>fx</i><svg class="tick" viewBox="0 0 6 3"><path d="M0 0h6L3 3z" fill="#fff"/></svg></button>
							<button aria-label="Add mask"><svg viewBox="0 0 20 18"><path d="M.5 1.500h19v15H.5z" fill="currentColor"/><circle cx="10" cy="9" r="4.500" fill="#535353"/></svg></button>
							<button aria-label="Adjustment layer"><svg viewBox="0 0 18 18"><use href="#half"/></svg><svg class="tick" viewBox="0 0 6 3"><path d="M0 0h6L3 3z" fill="#fff"/></svg></button>
							<button aria-label="New group"><svg viewBox="0 0 20 18"><path d="M1 1h8l1 2H1zM1 4.500h18V17H1z" fill="currentColor"/></svg></button>
							<button aria-label="New layer"><svg viewBox="0 0 18 18"><path d="M1 1h16v16H1zM9 5v8M5 9h8" fill="none" stroke="currentColor" stroke-width="1.500"/></svg></button>
							<button aria-label="Delete layer"><svg viewBox="0 0 18 18"><path d="M1 4h16M6 4V1h6v3M3 4v13h12V4M7 7v8M9 7v8M11.500 7v8" fill="none" stroke="currentColor" stroke-width="1.500"/></svg></button>
						</div>
					</section>
				</div>
			</div>
		</aside>
	</div>

	<footer class="taskbar">
		<div class="weather">
			<span class="sun"></span>
			<div><div>23°C</div><div class="soft">Zonnig</div></div>
		</div>
		<div class="apps">
			<button aria-label="Start"><svg viewBox="0 0 36 36"><path d="M1 1h16v16H1zM19 1h16v16H19zM1 19h16v16H1zM19 19h16v16H19z" fill="url(#g-win)"/></svg></button>
			<button class="find"><svg viewBox="0 0 20 20"><circle cx="8.500" cy="8.500" r="7" fill="none" stroke="#fff" stroke-width="2"/><path d="M13.500 13.500l6 6" stroke="#fff" stroke-width="2"/></svg>Search</button>
			<button aria-label="Task view"><svg viewBox="0 0 36 36"><path d="M0 10h27v24H0z" fill="#666"/><path d="M9 1h27v25H9z" fill="url(#g-view)"/><path d="M9 10h18v16H9z" fill="#aaa"/></svg></button>
			<button class="run" aria-label="Chrome"><svg viewBox="0 0 36 36"><circle cx="18" cy="18" r="18" fill="#fbc116"/><path d="M18 18L2.400 9A18 18 0 0 0 18 36l7.800-13.500z" fill="#2da94f"/><path d="M18 18H10.200L2.400 9a18 18 0 0 1 31.200 0z" fill="#e33b2e"/><circle cx="18" cy="18" r="9" fill="#fff"/><circle cx="18" cy="18" r="7" fill="#3a7de8"/></svg></button>
			<button aria-label="Discord"><svg viewBox="0 0 36 36"><circle cx="18" cy="18" r="18" fill="#5865f2"/><path d="M12 10.500c1-.5 2-.8 3.500-1l.7 1.200h3.600l.7-1.200c1.500.2 2.500.5 3.500 1 3 4.500 4 9 3.500 13.500-1.500 1.300-3 2-4.700 2.500l-1.200-2c1-.3 1.500-.6 2-1-3.500 1.500-7.700 1.500-11.200 0 .5.4 1 .7 2 1l-1.200 2c-1.700-.5-3.200-1.200-4.700-2.500C8 19.500 9 15 12 10.500z" fill="#fff"/><ellipse cx="14.300" cy="18.500" rx="2" ry="2.300" fill="#5865f2"/><ellipse cx="21.700" cy="18.500" rx="2" ry="2.300" fill="#5865f2"/></svg></button>
			<button class="run" aria-label="File Explorer"><svg viewBox="0 0 36 36"><path d="M0 4a2 2 0 0 1 2-2h10l3 3.500-3 3H0z" fill="#d99a00"/><path d="M0 8h12l3-3.500h20q1 0 1 1V33q0 1-1 1H1q-1 0-1-1z" fill="url(#g-folder)"/><path d="M6 34v-6a4 4 0 0 1 4-4h16a4 4 0 0 1 4 4v6z" fill="#1179c8"/><path d="M11 29h14" stroke="#0b4f8a" stroke-width="2"/></svg></button>
			<button class="run" aria-label="Premiere Pro"><svg viewBox="0 0 36 36"><rect x="1.500" y="2" width="33" height="32" rx="6" fill="#00005b"/><text x="18" y="24" text-anchor="middle" fill="#9999ff">Pr</text></svg></button>
			<button class="active" aria-label="Photoshop"><svg viewBox="0 0 36 36"><rect x="1.500" y="2" width="33" height="32" rx="6" fill="#001e36"/><text x="18" y="24" text-anchor="middle" fill="#31a8ff">Ps</text></svg></button>
			<button aria-label="After Effects"><svg viewBox="0 0 36 36"><rect x="1.500" y="2" width="33" height="32" rx="6" fill="#00005b"/><text x="18" y="24" text-anchor="middle" fill="#9999ff">Ae</text></svg></button>
			<button class="run" aria-label="Steam"><svg viewBox="0 0 36 36"><circle cx="18" cy="18" r="17" fill="url(#g-steam)"/><path d="M1 20l9 3.500 7-3 5-7 5 5-7 4.500-2.500 5A6 6 0 0 1 6 26l-4.500-2z" fill="#fff"/><circle cx="24" cy="12.500" r="7" fill="#fff"/><circle cx="24" cy="12.500" r="4.500" fill="#fff" stroke="#1b3b5c" stroke-width="1.500"/><circle cx="11.500" cy="25" r="3.500" fill="none" stroke="#1b3b5c" stroke-width="1.300"/></svg></button>
		</div>
		<div class="tray">
			<svg class="tray-up" viewBox="0 0 18 11"><path d="M1.500 9.500L9 2l7.500 7.500" fill="none" stroke="#fff" stroke-width="2"/></svg>
			<span class="lang">FRA</span>
			<svg class="tray-i" viewBox="0 0 24 20"><path d="M1 8a15.500 15.500 0 0 1 22 0M4.500 11.500a10.500 10.500 0 0 1 15 0M8 15a5.600 5.600 0 0 1 8 0" fill="none" stroke="#fff" stroke-width="1.800"/><circle cx="12" cy="17.500" r="2" fill="#fff"/></svg>
			<svg class="tray-i" viewBox="0 0 24 20"><path d="M1 7h4l5-5v16l-5-5H1zM13 7c1.500 2 1.500 4 0 6M16 4.500c3 3.500 3 7.500 0 11M19 2c5 5 5 11 0 16" fill="none" stroke="#fff" stroke-width="1.500"/></svg>
			<svg class="tray-i" viewBox="0 0 24 20"><path d="M8 5h10a3 3 0 0 1 3 3v7a3 3 0 0 1-3 3H5a3 3 0 0 1-3-3v-4" fill="none" stroke="#fff" stroke-width="1.500"/><path d="M9 7h8q2 0 2 2v5q0 2-2 2H6q-2 0-2-2v-2h4zM22 9h2v5h-2zM4 0L0 7h3l-1 5 6-7H5l2-5z" fill="#fff"/></svg>
			<div class="clock"><div>3:43 PM</div><div>6/5/2023</div></div>
			<span class="count">5</span>
		</div>
	</footer>
</body>
</html>
```
FILE: styles.css
```css
*{
	box-sizing: border-box;
}
body{
	margin: 0;
	height: 100vh;
	display: flex;
	flex-direction: column;
	overflow: hidden;
	background: #535353;
	color: #dedede;
	font: 15px/20px "Open Sans", "Noto Sans", sans-serif;
}
button, input, select{
	font: inherit;
	color: inherit;
	margin: 0;
	padding: 0;
	border: 0;
	border-radius: 0;
	background: none;
	appearance: none;
}
button{
	display: flex;
	align-items: center;
	justify-content: center;
}
svg{
	display: block;
	flex: none;
	overflow: visible;
}
p, h3, ul{
	margin: 0;
	padding: 0;
	list-style: none;
}
.defs{
	position: absolute;
	width: 0;
	height: 0;
}
.i22{ width: 22px; height: 22px; }
.i24{ width: 23px; height: 23px; }
.i26{ width: 26px; height: 26px; }
.chev{ width: 11px; height: 7px; }
.chev-v{ width: 7px; height: 12px; }
.dbl{ width: 11px; height: 8px; }
.dots{ width: 24px; height: 6px; }
.chain{ width: 12px; height: 22px; }

/* menu bar */
.menubar{
	flex: none;
	display: flex;
	align-items: center;
	gap: 18px;
	height: 42px;
	padding: 0 2px 7px 5px;
	border-bottom: 2px solid #3b3b3b;
	font-size: 17px;
}
.logo{
	width: 20px;
	height: 20px;
	margin-right: 5px;
}
.logo text{
	font: bold 11px "Open Sans", sans-serif;
	fill: #31a8ff;
}
.winctl{
	display: flex;
	margin-left: auto;
}
.winctl button{
	width: 70px;
}
.winctl svg{
	width: 16px;
	height: 16px;
}

/* options bar */
.options{
	flex: none;
	display: flex;
	align-items: center;
	height: 50px;
	padding: 0 3px;
	border-bottom: 2px solid #3b3b3b;
}
.grip-v{
	width: 3px;
	height: 28px;
	background: repeating-linear-gradient(#444 0 1px, transparent 1px 3px);
}
.home{
	width: 63px;
}
.home svg{
	width: 26px;
	height: 22px;
}
.sep{
	flex: none;
	width: 2px;
	height: 34px;
	margin: 0 12px 0 11px;
	background: #3e3e3e;
}
.home + .sep{
	margin-left: 5px;
}
.tool-now{
	gap: 15px;
}
.check{
	display: flex;
	align-items: center;
	gap: 8px;
	width: 125px;
}
.check.wide{
	width: 204px;
}
.check input, .toggle input{
	flex: none;
	width: 14px;
	height: 14px;
	border: 1px solid #8a8a8a;
	border-radius: 3px;
}
.check input:checked{
	border-color: #e0e0e0;
	background: #e0e0e0;
}
.check input:checked::after{
	content: "";
	display: block;
	width: 4px;
	height: 8px;
	margin: 0 0 0 4px;
	border: solid #222;
	border-width: 0 2px 2px 0;
	transform: rotate(40deg);
}
.pick{
	position: relative;
	display: flex;
	height: 28px;
	border: 1px solid #666;
	border-radius: 4px;
	background: #454545;
}
.pick select{
	width: 100%;
	padding-left: 12px;
	outline: 0;
}
.pick .chev{
	position: absolute;
	right: 5px;
	top: 11px;
	pointer-events: none;
}
.focus{
	width: 81px;
	border: 2px solid #2f5c96;
}
.icons{
	display: flex;
}
.icons button{
	width: 39px;
	height: 34px;
}
.icons .apart{
	margin-left: 12px;
}
.dim{
	color: #9a9a9a;
}
.faint{
	color: #8a8a8a;
}
.faint svg{
	fill: none;
	stroke: currentColor;
	stroke-width: 1.3;
}
.more{
	width: 40px;
}
.mode{
	width: 85px;
	padding-left: 2px;
	color: #858585;
}
.opt-right{
	display: flex;
	align-items: center;
	gap: 19px;
	margin-left: auto;
}
.share{
	width: 79px;
	height: 34px;
	border-radius: 17px;
	background: #1473e6;
	color: #fff;
}
.layout{
	gap: 15px;
}
.layout svg:first-child{
	width: 26px;
	height: 20px;
}

/* workspace columns */
.workspace{
	flex: 1;
	display: flex;
	min-height: 0;
	background: #424242;
}
.head{
	flex: none;
	display: flex;
	align-items: center;
	height: 18px;
	border-bottom: 1px solid #3a3a3a;
	background: #424242;
}
.grip{
	width: 28px;
	height: 7px;
	margin: 5px auto 0;
	background: repeating-linear-gradient(90deg, #444 0 1px, transparent 1px 3px);
}

/* toolbar */
.toolbar{
	flex: none;
	width: 55px;
	display: flex;
	flex-direction: column;
	margin-right: 3px;
	border-right: 2px solid #383838;
	background: #535353;
}
.toolbar .head{
	padding-left: 4px;
}
.toolbar .grip{
	flex: none;
	margin: 5px 0 13px 10px;
}
.tool{
	position: relative;
	flex: none;
	width: 48px;
	height: 37px;
	margin: 1px 0 1px 1px;
	border-radius: 3px;
}
.tool.on{
	background: #383838;
	outline: 1px solid #626262;
	outline-offset: -1px;
}
.sub::after{
	content: "";
	position: absolute;
	right: 5px;
	bottom: 4px;
	border: solid transparent;
	border-width: 0 0 5px 5px;
	border-bottom-color: #c8c8c8;
}
.swap{
	display: flex;
	gap: 10px;
	margin: 10px 0 6px 3px;
}
.swap svg{
	width: 16px;
	height: 16px;
}
.colors{
	position: relative;
	flex: none;
	width: 46px;
	height: 46px;
}
.toolbar .colors{
	margin: 0 0 6px 2px;
}
.colors button{
	position: absolute;
	width: 31px;
	height: 31px;
	border: 2px solid #333;
}
.colors .fg{
	left: 0;
	top: 0;
	background: #000;
	box-shadow: inset 0 0 0 2px #fff;
}
.colors .bg{
	right: 0;
	bottom: 0;
	background: #fff;
}

/* document */
.doc{
	flex: 1;
	min-width: 0;
	display: flex;
	flex-direction: column;
}
.doctabs{
	flex: none;
	display: flex;
	height: 44px;
	border-bottom: 2px solid #383838;
	font-size: 16px;
	font-weight: 700;
	color: #9b9b9b;
}
.doctab{
	display: flex;
	align-items: center;
	gap: 13px;
	padding: 0 15px 0 16px;
	border-right: 2px solid #383838;
}
.doctab.on{
	background: #535353;
	color: #f2f2f2;
}
.doctab button{
	color: #bdbdbd;
}
.doctab svg{
	width: 10px;
	height: 10px;
}
.view{
	flex: 1;
	display: flex;
	min-height: 0;
}
.canvas{
	flex: 1;
	display: flex;
	padding: 206px 186px 206px 97px;
	background: #282828;
}
.artboard{
	flex: 1;
	border: 14px solid #00a99d;
	background: conic-gradient(#fff 25%, #cbcbcb 0 50%, #fff 0 75%, #cbcbcb 0) 2px 2px / 16px 16px padding-box;
	box-shadow: 0 4px 8px rgba(0, 0, 0, .3);
}
.vscroll{
	flex: none;
	width: 25px;
	display: flex;
	flex-direction: column;
	align-items: center;
	gap: 10px;
	padding: 12px 0;
	background: #4a4a4a;
	color: #8f8f8f;
}
.track{
	flex: 1;
	display: flex;
	min-height: 0;
}
.vscroll .track{
	flex-direction: column;
	padding-top: 390px;
}
.vscroll .thumb{
	width: 18px;
	height: 532px;
	margin-left: 1px;
	border-radius: 2px;
	background: #696969;
}
.status{
	flex: none;
	display: flex;
	align-items: center;
	height: 20px;
	overflow: hidden;
}
.status .zoom{
	width: 72px;
	height: 20px;
	padding-left: 9px;
	background: #464646;
	color: #f0f0f0;
}
.info{
	width: 255px;
	height: 20px;
	padding-left: 36px;
	background: #535353;
}
.status > button{
	width: 20px;
	height: 20px;
	background: #4d4d4d;
}
.hscroll{
	flex: 1;
	display: flex;
	align-items: center;
	height: 20px;
	padding: 0 37px 0 13px;
	background: #4a4a4a;
	color: #8f8f8f;
}
.hscroll .track{
	padding-left: 521px;
}
.hscroll .thumb{
	width: 587px;
	height: 16px;
	border-radius: 2px 2px 0 0;
	background: #696969;
}

/* right side */
.side{
	flex: none;
	width: 484px;
	margin-left: 3px;
	display: flex;
	flex-direction: column;
	border-left: 2px solid #383838;
}
.side .head{
	justify-content: space-between;
	padding: 0 5px 0 37px;
}
.side-body{
	flex: 1;
	display: flex;
	min-height: 0;
}
.dock{
	flex: none;
	width: 56px;
	border-right: 2px solid #3a3a3a;
	background: #535353;
}
.dockbox{
	height: 62px;
	padding-top: 5px;
	border-bottom: 2px solid #3a3a3a;
}
.dockbox .grip{
	margin-top: 0;
}
.dockbox button{
	width: 100%;
	margin-top: 9px;
}
.dockbox svg{
	width: 22px;
	height: 26px;
}
.panels{
	flex: 1;
	display: flex;
	flex-direction: column;
	min-width: 0;
	margin-left: 1px;
	border-left: 2px solid #3a3a3a;
}
.panel{
	display: flex;
	flex-direction: column;
	background: #535353;
}
.color{
	flex: none;
	height: 223px;
	border-bottom: 2px solid #3a3a3a;
}
.props{
	flex: none;
	height: 550px;
	margin-top: 3px;
	border-bottom: 2px solid #3a3a3a;
}
.layers{
	flex: 1;
	min-height: 0;
	margin-top: 3px;
}
.tabs{
	flex: none;
	display: flex;
	height: 42px;
	background: #424242;
	color: #9f9f9f;
	font-size: 14px;
	font-weight: 700;
}
.tabs button{
	padding: 0 12px 4px;
	border: solid #3a3a3a;
	border-width: 1px 2px 2px 0;
}
.tabs .on{
	padding-left: 14px;
	border-color: #535353;
	background: #535353;
	color: #f5f5f5;
}
.tabs .menu{
	flex: 1;
	justify-content: flex-end;
	padding: 2px 5px 0 0;
	border-right: 0;
	color: #c0c0c0;
}
.menu svg{
	width: 15px;
	height: 12px;
}
.picker{
	display: flex;
	padding: 11px 21px 0 13px;
}
.picker .colors{
	margin: 4px 8px 0 0;
}
.field{
	position: relative;
	flex: 1;
	height: 138px;
	overflow: hidden;
	background: linear-gradient(transparent, #000), linear-gradient(90deg, #fff, #f00);
}
.ring{
	position: absolute;
	left: -10px;
	bottom: -10px;
	width: 20px;
	height: 20px;
	border: 1px solid #fff;
	border-radius: 50%;
}
.hue{
	position: relative;
	width: 29px;
	height: 138px;
	margin-left: 25px;
	background: linear-gradient(#f00, #f0f, #00f, #0ff, #0f0, #ff0, #f00);
}
.knob{
	position: absolute;
	left: -14px;
	bottom: -5px;
	width: 12px;
	height: 12px;
}

/* properties */
.kind{
	flex: none;
	display: flex;
	align-items: center;
	gap: 10px;
	height: 51px;
	padding-left: 15px;
	border-bottom: 2px solid #3e3e3e;
}
.badge{
	display: flex;
	align-items: center;
	justify-content: center;
	width: 34px;
	height: 34px;
	border: 1px solid #666;
	border-radius: 3px;
	background: #383838;
}
.badge svg{
	width: 21px;
	height: 19px;
}
.scrolled{
	display: flex;
	flex: 1;
	min-height: 0;
}
.content{
	flex: 1;
}
.pscroll{
	flex: none;
	width: 21px;
	display: flex;
	flex-direction: column;
	align-items: center;
	padding: 12px 0;
	gap: 6px;
	background: #4a4a4a;
	color: #9a9a9a;
}
.pscroll .thumb{
	width: 18px;
	margin-left: 3px;
	border-radius: 2px;
	background: #696969;
}
.props .pscroll{
	height: 418px;
}
.props .thumb{
	height: 210px;
}
.block h3{
	display: flex;
	align-items: center;
	gap: 11px;
	font-size: 16px;
	font-weight: 600;
	color: #f2f2f2;
}
.fold{
	width: 12px;
	height: 8px;
}
.transform{
	height: 175px;
	padding: 10px 0 0 11px;
	border-bottom: 2px solid #3e3e3e;
}
.dims{
	display: grid;
	grid-template-columns: 12px 50px 79px 46px 79px;
	grid-template-rows: 25px 25px;
	row-gap: 13px;
	margin: 15px 0 0 15px;
	align-items: center;
}
.dims .chain{
	grid-row: span 2;
}
.dims label{
	padding-right: 10px;
	text-align: right;
}
.dims input{
	width: 79px;
	height: 25px;
	padding-left: 5px;
	border: 1px solid #666;
	background: #454545;
	color: #f0f0f0;
}
.rotate{
	display: flex;
	align-items: center;
	margin: 18px 0 0 48px;
}
.angle{
	width: 20px;
	height: 15px;
	margin-right: 10px;
}
.rotate > button{
	width: 43px;
}
.combo{
	display: flex;
	height: 25px;
	border: 1px solid #666;
	border-radius: 3px;
	background: #454545;
	color: #f0f0f0;
}
.combo input{
	width: 53px;
	padding-left: 6px;
	border-right: 1px solid #666;
}
.combo button{
	width: 22px;
	padding-top: 3px;
}
.rotate .combo{
	margin-right: 39px;
}
.rotate .combo input{
	width: 58px;
}
.align{
	padding: 11px 108px 0 11px;
}
.align p{
	padding: 14px 0 0 3px;
}
.six{
	display: flex;
	height: 74px;
	padding-bottom: 10px;
	border-bottom: 2px solid #3e3e3e;
	color: #9a9a9a;
}
.six button{
	width: 43px;
}
.six .apart{
	margin-left: 26px;
}
.six + p{
	padding-top: 10px;
}
.six.last{
	height: 64px;
	padding-bottom: 0;
}

/* layers */
.lrow{
	flex: none;
	display: flex;
	align-items: center;
	height: 42px;
	padding-left: 4px;
	border-bottom: 2px solid #3e3e3e;
}
.filter{
	height: 48px;
	padding-top: 6px;
}
.kindpick{
	width: 130px;
}
.kindpick select{
	padding-left: 33px;
}
.glass{
	position: absolute;
	left: 12px;
	top: 5px;
	width: 16px;
	height: 16px;
}
.filters, .locks{
	display: flex;
}
.filters{
	margin-left: 10px;
}
.filters button{
	width: 36px;
}
.filters svg, .locks svg{
	width: 17px;
	height: 17px;
}
.locks .big{
	width: 20px;
	height: 20px;
}
.toggle input{
	display: flex;
	width: 13px;
	height: 26px;
	margin-left: 9px;
	border-radius: 7px;
	border-color: #6a6a6a;
	background: #444;
}
.toggle input::after{
	content: "";
	width: 12px;
	height: 12px;
	border-radius: 50%;
	background: #e0e0e0;
}
.blend{
	width: 194px;
}
.amount{
	flex: none;
	width: 72px;
	padding-right: 6px;
	text-align: right;
}
.lock{
	height: 43px;
	padding-left: 8px;
	border-bottom: 0;
}
.locks{
	margin-left: 4px;
	flex: none;
}
.locks button{
	width: 33px;
}
.locks + .amount{
	width: 56px;
}
.lock > span:first-child{
	width: 37px;
}
.list{
	flex: 1;
	padding-top: 1px;
	overflow: hidden;
}
.list li{
	display: flex;
	align-items: center;
	height: 42px;
	border-bottom: 1px solid #424242;
	color: #e8e8e8;
}
.vis{
	display: flex;
	align-items: center;
	justify-content: center;
	width: 45px;
	height: 41px;
	padding-right: 2px;
	border-right: 1px solid #424242;
	background: #535353;
}
.vis input{
	width: 19px;
	height: 19px;
	border: 1px solid #4c4c4c;
	border-right-color: #707070;
	border-bottom-color: #707070;
}
.vis input:checked{
	position: absolute;
	opacity: 0;
}
.vis svg{
	width: 19px;
	height: 13px;
	margin-left: 4px;
}
.thumb-img, .mask{
	position: relative;
	flex: none;
	width: 48px;
	height: 28px;
	border: 1px solid #2c2c2c;
}
.thumb-img{
	margin: 0 14px 0 6px;
	background: conic-gradient(#fff 25%, #cbcbcb 0 50%, #fff 0 75%, #cbcbcb 0) 0 0 / 8px 8px;
}
.yellow{
	background: #ffe716;
}
.list .chain{
	margin: 0 5px 0 -9px;
}
.mask{
	margin-right: 15px;
	background: #fff;
}
.adj{
	width: 24px;
	height: 24px;
	margin: 0 26px 0 18px;
}
.bar{
	position: absolute;
	left: 25px;
	top: 6px;
	width: 16px;
	height: 3px;
	background: #149e9e;
}
.frame{
	position: absolute;
	left: -4px;
	top: -4px;
	width: 54px;
	height: 34px;
}
.list .on{
	background: #6a6a6a;
}
.layers .thumb{
	height: 277px;
}
.foot{
	flex: none;
	display: flex;
	align-items: center;
	justify-content: flex-end;
	height: 33px;
	padding-right: 28px;
	border-top: 2px solid #3e3e3e;
}
.foot button{
	position: relative;
	width: 40px;
}
.foot svg{
	width: 19px;
	height: 18px;
}
.foot .tick{
	position: absolute;
	right: 7px;
	bottom: -3px;
	width: 6px;
	height: 3px;
}
.fx{
	font-size: 18px;
}
.off{
	color: #8a8a8a;
}

/* taskbar */
.taskbar{
	flex: none;
	display: grid;
	grid-template-columns: 1fr auto 1fr;
	align-items: center;
	height: 72px;
	border-top: 2px solid #3c4450;
	background: linear-gradient(90deg, #1d212c 0, #1b2233 20%, #141f55 28%, #13205c 37%, #14294c 40%, #111f60 46%, #1f2033 52%, #141f5c 55%, #11205f 61%, #1c1f30 66%, #1d212c 70%);
	color: #fff;
	font-size: 17px;
	line-height: 24px;
}
.weather{
	display: flex;
	align-items: center;
	gap: 14px;
	padding-left: 32px;
	font-size: 18px;
}
.sun{
	width: 30px;
	height: 30px;
	border-radius: 50%;
	background: linear-gradient(135deg, #f6c93c, #ef5a0c);
}
.soft{
	color: #b4b8c4;
}
.apps{
	display: flex;
	align-items: center;
}
.apps button{
	position: relative;
	width: 66px;
	height: 60px;
}
.apps svg{
	width: 36px;
	height: 36px;
}
.apps text{
	font: bold 17px "Open Sans", sans-serif;
}
.apps .find{
	gap: 8px;
	width: 150px;
	height: 48px;
	margin: 0 4px 0 7px;
	border: 1px solid #2e3c68;
	border-radius: 24px;
	background: #22315c;
}
.apps .find svg{
	width: 20px;
	height: 20px;
}
.run::after, .active::after{
	content: "";
	position: absolute;
	left: 28px;
	bottom: 1px;
	width: 9px;
	height: 5px;
	border-radius: 3px;
	background: #9a9db0;
}
.apps .active{
	width: 60px;
	margin: 0 3px;
	border: 1px solid #33406f;
	border-radius: 6px;
	background: #24305f;
}
.active::after{
	left: 17px;
	bottom: 0;
	width: 24px;
	background: #4cc2ff;
}
.tray{
	display: flex;
	align-items: center;
	justify-content: flex-end;
	padding-right: 30px;
}
.tray-up{
	width: 18px;
	height: 11px;
}
.lang{
	margin: 0 28px 0 32px;
}
.tray-i{
	width: 25px;
	height: 21px;
	margin-right: 11px;
}
.clock{
	width: 88px;
	text-align: right;
}
.count{
	width: 24px;
	height: 24px;
	margin-left: 11px;
	border-radius: 50%;
	background: #4cc2ff;
	color: #111;
	font-size: 14px;
	text-align: center;
}
```
